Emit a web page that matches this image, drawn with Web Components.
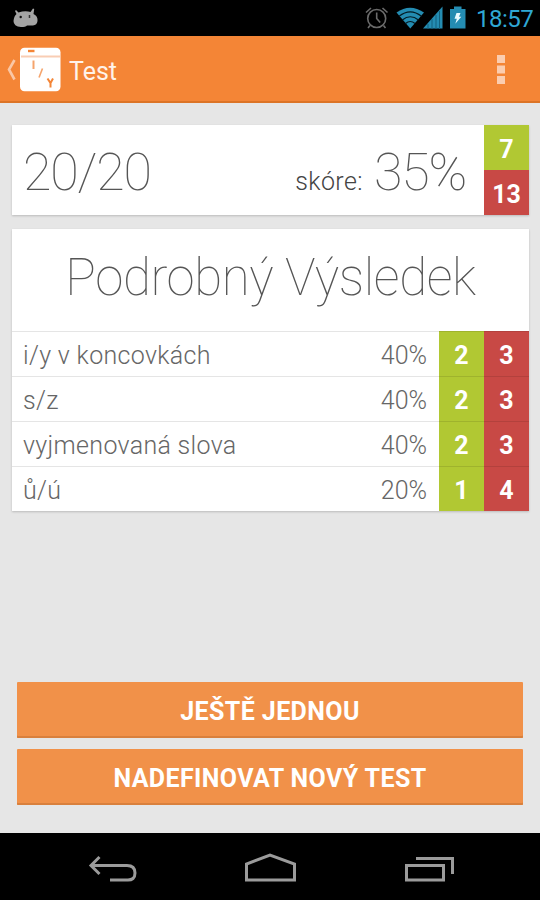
<!DOCTYPE html>
<html lang="cs">
<head>
<meta charset="utf-8">
<title>Test</title>
<style>
	html, body {
		margin: 0;
		height: 100%;
		background: #e6e6e6;
		font-family: Roboto, "Noto Sans", sans-serif;
	}
</style>
</head>
<body>
<test-app></test-app>

<template id="status-bar">
	<style>
		:host {
			display: flex;
			justify-content: space-between;
			height: 36px;
			background: #000;
			color: #33b5e5;
		}
		svg { display: block; }
		.right { display: flex; }
		.time {
			width: 64px;
			font-size: 24px;
			line-height: 38px;
			letter-spacing: -0.5px;
			opacity: .93;
		}
	</style>
	<svg width="60" height="36" viewBox="0 0 60 36">
		<path d="M16 10l2.500 2.500Q25 10.500 30.500 12L33 8.500l1.200.5-.7 5Q38 16 37.500 21q-.5 4-4.500 4.500H27q-1.500 1.500-6 1.500-7.500-.5-7.500-6 .5-5 3-7l-1.500-3z" fill="#a4a4a4"/>
		<circle cx="20.700" cy="17" r="1.200" fill="#111"/>
		<path d="M29.500 15v3" stroke="#333" stroke-width="1.500"/>
	</svg>
	<div class="right">
		<svg width="117" height="36" viewBox="360 0 117 36">
			<g fill="none" stroke="#6b6b6b" stroke-width="1.600">
				<circle cx="377.700" cy="18.500" r="9"/>
				<path d="M377.700 12.500v6l3.500 4M367 12.500l5-4.500M383.500 8l5 4.500M371 25.500l-2 2.500M384.500 25.500l2 2.500"/>
			</g>
			<path d="M397.500 12.500Q411 3 425 12.500L411.300 28.500z" fill="#248cb2"/>
			<g fill="none" stroke="#031b24" stroke-width="1.200">
				<path d="M400 16.300Q411.300 7.500 422.500 16.300M403.300 20Q411.300 13.500 419.500 20M406.500 23.500q4.800-4 9.500 0"/>
			</g>
			<path d="M424 28.500L443.500 6.500v22z" fill="#248cb2"/>
			<path d="M429 24v5M433 19v10M437 15v14M440.500 11v18" stroke="#12617e" stroke-width="1"/>
			<path d="M451 9h4V6.500h7.500V9h4v19.500H451z" fill="#248cb2"/>
			<path d="M457.500 13h4l-1.500 3.700h2.300l-6 7 1.500-5h-2.300z" fill="#e8faff"/>
		</svg>
		<div class="time"><slot></slot></div>
	</div>
</template>

<template id="action-bar">
	<style>
		:host {
			display: flex;
			box-sizing: border-box;
			height: 67px;
			background: #f48536;
			border-bottom: 2px solid #dc7426;
			color: #fff3ea;
		}
		svg { display: block; flex: none; }
		.title {
			flex: 1;
			padding-left: 7px;
			font-size: 25px;
			line-height: 71px;
		}
	</style>
	<svg width="62" height="65" viewBox="0 36 62 65">
		<path d="M14.500 60L9 69.500l5.500 10" fill="none" stroke="#fac7a5" stroke-width="2.600"/>
		<rect x="20" y="47.700" width="40.500" height="43.500" rx="4.500" fill="#fff"/>
		<path d="M21 56.500h39" stroke="#f9cdb4" stroke-width="2"/>
		<path d="M28 51h6.500" stroke="#f48536" stroke-width="2.400"/>
		<g fill="none" stroke="#f48536">
			<path d="M33.500 60.500v8.500" stroke="#f5a46c" stroke-width="2"/>
			<path d="M42.500 68.500l-3.500 9" stroke="#f5a46c" stroke-width="1.600"/>
			<path d="M47.500 78.500l3 4.500 2.500-4.500M50.500 82.500v5" stroke-width="2"/>
		</g>
	</svg>
	<div class="title"><slot></slot></div>
	<svg width="60" height="65" viewBox="480 36 60 65">
		<path d="M497 55h8v8h-8zM497 65.500h8v8h-8zM497 76h8v8h-8z" fill="#fbcdb0"/>
	</svg>
</template>

<template id="count-badge">
	<style>
		:host {
			display: flex;
			align-items: center;
			justify-content: center;
			width: 45px;
			height: 45px;
			background: #b1c833;
			color: #fff;
			font-size: 25px;
			font-weight: 700;
			line-height: 1;
			letter-spacing: 0;
		}
		:host([wrong]) { background: #c84945; }
		span { padding-top: 3px; }
	</style>
	<span><slot></slot></span>
</template>

<template id="score-card">
	<style>
		:host {
			display: flex;
			height: 90px;
			background: #fff;
			box-shadow: 0 1px 2px #bbb;
			color: #555;
			font-weight: 100;
			font-size: 52px;
			line-height: 96px;
			letter-spacing: -1.2px;
		}
		.done { flex: 1; padding-left: 11px; }
		.label {
			margin-right: 11px;
			padding-top: 9px;
			font-size: 25px;
			font-weight: 300;
			letter-spacing: .4px;
			color: #444;
		}
		.score { margin-right: 18px; }
	</style>
	<div class="done"><slot name="done"></slot></div>
	<div class="label"><slot name="label"></slot></div>
	<div class="score"><slot name="score"></slot></div>
	<div><slot></slot></div>
</template>

<template id="result-card">
	<style>
		:host {
			display: block;
			background: #fff;
			box-shadow: 0 1px 2px #bbb;
		}
		.heading {
			height: 102px;
			font-size: 51px;
			font-weight: 100;
			line-height: 97px;
			letter-spacing: -0.4px;
			text-align: center;
			color: #555;
		}
	</style>
	<div class="heading"><slot name="heading"></slot></div>
	<slot></slot>
</template>

<template id="result-row">
	<style>
		:host {
			display: flex;
			height: 45px;
			background: #fff;
			color: #666;
			font-size: 25px;
			font-weight: 300;
			line-height: 49px;
		}
		.name { flex: 1; padding-left: 11px; letter-spacing: .32px; }
		.percent { padding-right: 12px; }
		.name, .percent, count-badge { box-shadow: inset 0 1px rgba(0, 0, 0, .1); }
	</style>
	<div class="name"><slot></slot></div>
	<div class="percent"></div>
	<count-badge class="right"></count-badge>
	<count-badge class="wrong" wrong></count-badge>
</template>

<template id="flat-button">
	<style>
		:host { display: block; }
		button {
			display: block;
			width: 100%;
			height: 56px;
			padding: 3px 0 0;
			border: 0;
			border-radius: 1px;
			background: #f19149;
			box-shadow: inset 0 -2px #d9803d;
			color: #fff;
			font: 700 25px/1 Roboto, "Noto Sans", sans-serif;
			letter-spacing: .4px;
		}
	</style>
	<button><slot></slot></button>
</template>

<template id="nav-bar">
	<style>
		:host {
			display: block;
			height: 67px;
			background: #000;
		}
		svg { display: block; }
	</style>
	<svg width="540" height="67" viewBox="0 833 540 67" fill="none" stroke="#9b9b9b" stroke-width="3">
		<path d="M91 865.500h36q8 0 8 7.500t-8 7h-17M99.500 857l-8.500 8.500 8.500 8.500"/>
		<path d="M246.500 880v-16l23.500-9 24.500 9v16z"/>
		<path d="M406.500 865.500h37v14.500h-37zM416 858.500h36.500V874"/>
	</svg>
</template>

<template id="test-app">
	<style>
		:host {
			display: flex;
			flex-direction: column;
			width: 540px;
			height: 900px;
			overflow: hidden;
			background: #e6e6e6;
		}
		main {
			flex: 1;
			display: flex;
			flex-direction: column;
			gap: 14px;
			padding: 22px 11px 28px 12px;
		}
		.actions {
			display: flex;
			flex-direction: column;
			gap: 11px;
			margin: auto 6px 0 5px;
		}
	</style>
	<status-bar>18:57</status-bar>
	<action-bar>Test</action-bar>
	<main>
		<score-card>
			<span slot="done">20/20</span>
			<span slot="label">skóre:</span>
			<span slot="score">35%</span>
			<count-badge>7</count-badge>
			<count-badge wrong>13</count-badge>
		</score-card>
		<result-card>
			<span slot="heading">Podrobný Výsledek</span>
			<result-row percent="40%" right="2" wrong="3">i/y v koncovkách</result-row>
			<result-row percent="40%" right="2" wrong="3">s/z</result-row>
			<result-row percent="40%" right="2" wrong="3">vyjmenovaná slova</result-row>
			<result-row percent="20%" right="1" wrong="4">ů/ú</result-row>
		</result-card>
		<div class="actions">
			<flat-button>JEŠTĚ JEDNOU</flat-button>
			<flat-button>NADEFINOVAT NOVÝ TEST</flat-button>
		</div>
	</main>
	<nav-bar></nav-bar>
</template>

<script>
class TemplateElement extends HTMLElement {
	constructor() {
		super()
		this.root = this.attachShadow({mode: 'open'})
		this.root.appendChild(document.getElementById(this.localName).content.cloneNode(true))
	}
}

const plain = ['status-bar', 'action-bar', 'count-badge', 'score-card', 'result-card', 'flat-button', 'nav-bar']
plain.forEach((name) => customElements.define(name, class extends TemplateElement {}))

customElements.define('result-row', class extends TemplateElement {
	connectedCallback() {
		['percent', 'right', 'wrong'].forEach((key) => {
			this.root.querySelector('.' + key).textContent = this.getAttribute(key)
		})
	}
})

customElements.define('test-app', class extends TemplateElement {})
</script>
</body>
</html>
